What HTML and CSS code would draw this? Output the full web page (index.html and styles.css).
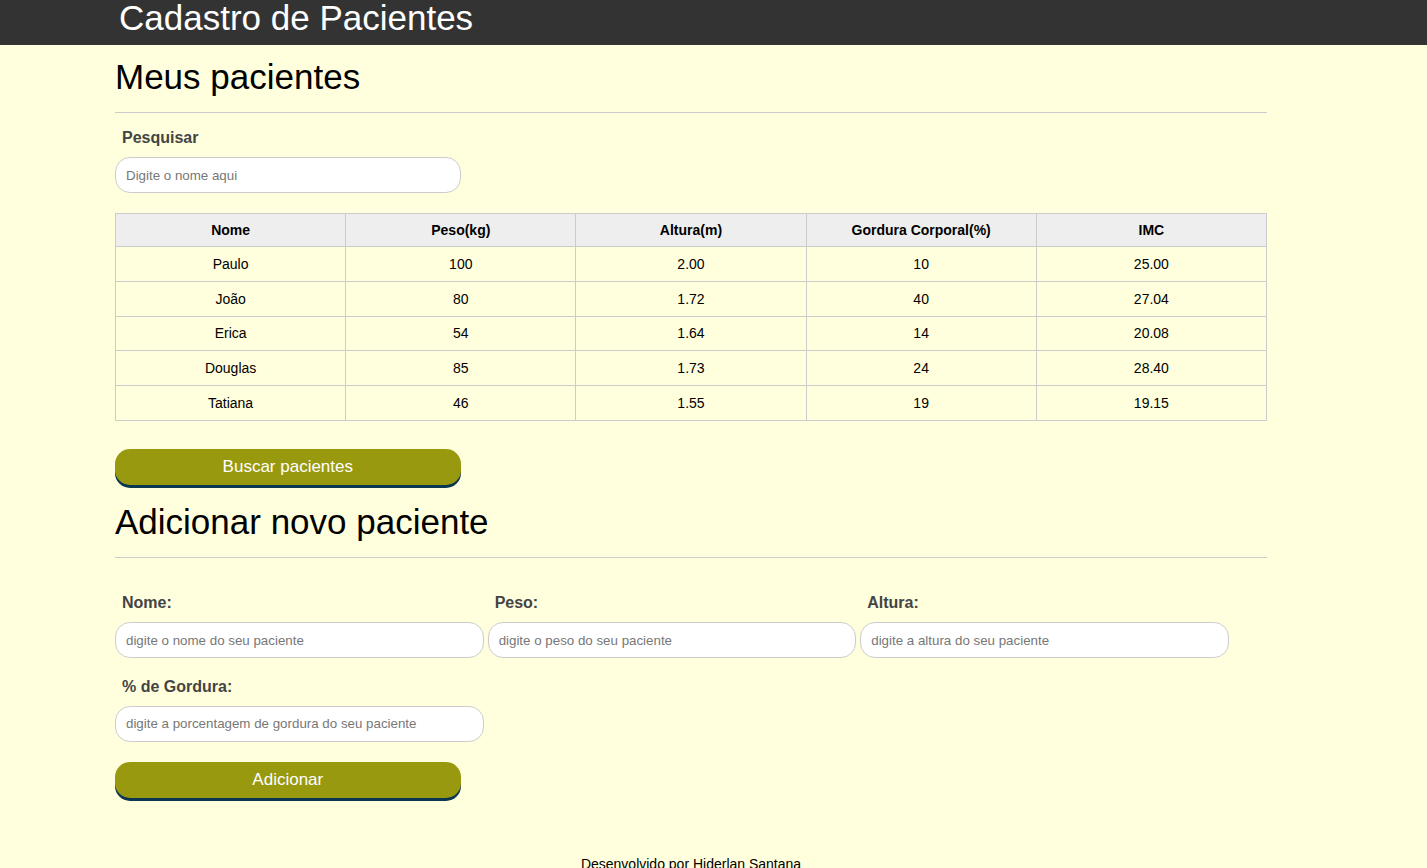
FILE: index.html
```html
<!DOCTYPE html>
<html lang="pt-br">
<head>
<meta charset="utf-8">
<title>Cadastro de Pacientes</title>
<link rel="stylesheet" href="styles.css">
</head>
<body>
<header class="topbar">
  <div class="container">
    <h1 class="site-title">Cadastro de Pacientes</h1>
  </div>
</header>
<main class="container">
  <section class="section">
    <h2 class="section-title">Meus pacientes</h2>
    <hr class="rule">
    <div class="search">
      <label class="field-label" for="filtrar">Pesquisar</label>
      <input class="field-input search-input" id="filtrar" type="text" placeholder="Digite o nome aqui">
    </div>
    <table class="patients">
      <thead>
        <tr><th>Nome</th><th>Peso(kg)</th><th>Altura(m)</th><th>Gordura Corporal(%)</th><th>IMC</th></tr>
      </thead>
      <tbody>
        <tr><td>Paulo</td><td>100</td><td>2.00</td><td>10</td><td>25.00</td></tr>
        <tr><td>João</td><td>80</td><td>1.72</td><td>40</td><td>27.04</td></tr>
        <tr><td>Erica</td><td>54</td><td>1.64</td><td>14</td><td>20.08</td></tr>
        <tr><td>Douglas</td><td>85</td><td>1.73</td><td>24</td><td>28.40</td></tr>
        <tr><td>Tatiana</td><td>46</td><td>1.55</td><td>19</td><td>19.15</td></tr>
      </tbody>
    </table>
    <button class="btn btn-search" type="button">Buscar pacientes</button>
  </section>
  <section class="section">
    <h2 class="section-title title-add">Adicionar novo paciente</h2>
    <hr class="rule">
    <form class="form">
      <div class="grid">
        <div class="group">
          <label class="field-label" for="nome">Nome:</label>
          <input class="field-input" id="nome" type="text" placeholder="digite o nome do seu paciente">
        </div>
        <div class="group">
          <label class="field-label" for="peso">Peso:</label>
          <input class="field-input" id="peso" type="text" placeholder="digite o peso do seu paciente">
        </div>
        <div class="group">
          <label class="field-label" for="altura">Altura:</label>
          <input class="field-input" id="altura" type="text" placeholder="digite a altura do seu paciente">
        </div>
        <div class="group">
          <label class="field-label" for="gordura">% de Gordura:</label>
          <input class="field-input" id="gordura" type="text" placeholder="digite a porcentagem de gordura do seu paciente">
        </div>
      </div>
      <button class="btn btn-add" type="button">Adicionar</button>
    </form>
  </section>
  <footer class="footer">Desenvolvido por Hiderlan Santana</footer>
</main>
</body>
</html>
```
FILE: styles.css
```css
html, body {
  margin: 0;
  padding: 0;
}
body {
  background: #ffffdd;
  font-family: "Liberation Sans", Arial, sans-serif;
  color: #000;
}
.container {
  width: 1152px;
  margin-left: 115px;
}
.topbar {
  background: #333333;
  height: 45px;
}
.site-title {
  margin: 0;
  padding-left: 4px;
  font-size: 35px;
  font-weight: normal;
  line-height: 36px;
  color: #fff;
}
.section-title {
  margin: 12px 0 0;
  font-size: 35px;
  font-weight: normal;
  line-height: 40px;
}
.title-add {
  margin-top: 17.5px;
}
.rule {
  margin: 15px 0 0;
  border: 0;
  border-top: 1px solid #cccccc;
  height: 0;
}
.search {
  margin-top: 16px;
  width: 30%;
}
.field-label {
  display: block;
  padding-left: 7px;
  margin-bottom: 10px;
  font-size: 16px;
  line-height: 18px;
  font-weight: bold;
  color: #444;
}
.field-input {
  display: block;
  box-sizing: border-box;
  width: 100%;
  height: 36px;
  margin: 0;
  padding: 0 10px;
  border: 1px solid #cccccc;
  border-radius: 15px;
  background: #fff;
  font-family: "Liberation Sans", Arial, sans-serif;
  font-size: 13.33px;
  color: #333;
  outline: none;
}
.field-input::placeholder {
  color: #777;
}
.patients {
  margin-top: 20px;
  width: 100%;
  border-collapse: collapse;
  table-layout: fixed;
  font-size: 14px;
}
.patients th, .patients td {
  border: 1px solid #cccccc;
  text-align: center;
  line-height: 16px;
}
.patients th {
  background: #eeeeee;
  padding: 8px 4px;
  font-weight: bold;
}
.patients td {
  padding: 8.9px 4px;
}
.btn {
  display: block;
  width: 30%;
  height: 36px;
  border: 0;
  border-radius: 15px;
  background: #999910;
  box-shadow: 0 3px 0 #0b3550;
  color: #fff;
  font-family: "Liberation Sans", Arial, sans-serif;
  font-size: 17px;
  padding: 0;
}
.btn-search {
  margin-top: 28px;
}
.form {
  margin-top: 36px;
}
.grid {
  display: flex;
  flex-wrap: wrap;
  column-gap: 4px;
  row-gap: 19.5px;
}
.group {
  width: 32%;
}
.btn-add {
  margin-top: 20px;
}
.footer {
  margin-top: 58px;
  text-align: center;
  font-size: 14px;
  line-height: 16px;
  padding-bottom: 20px;
}
```
